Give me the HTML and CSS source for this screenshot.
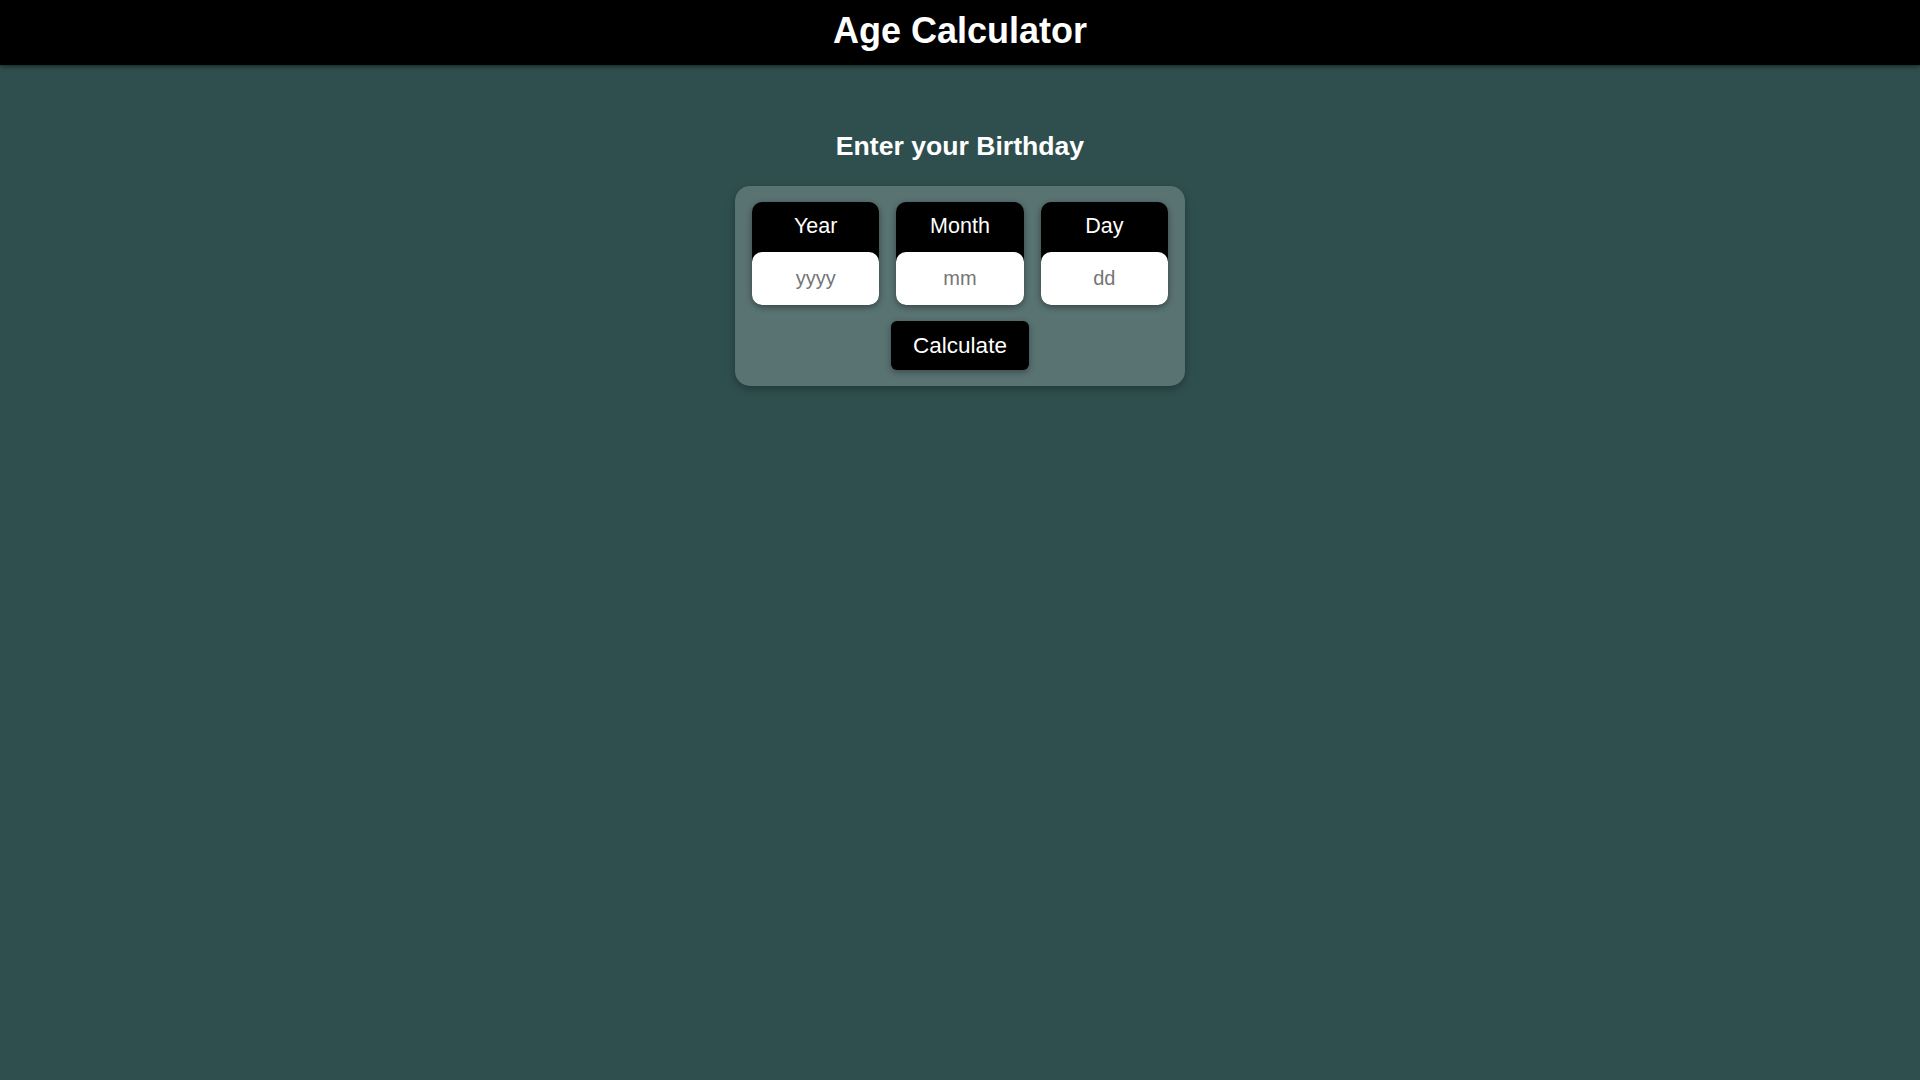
FILE: index.html
```html
<!DOCTYPE html>
<html lang="en">
<head>
<meta charset="utf-8">
<title>Age Calculator</title>
<link rel="stylesheet" href="styles.css">
</head>
<body>
<header class="topbar">
  <h1 class="title">Age Calculator</h1>
</header>
<main class="main">
  <h2 class="subtitle">Enter your Birthday</h2>
  <section class="card">
    <div class="fields">
      <div class="field">
        <label class="field-label" for="year">Year</label>
        <input class="field-input" id="year" type="text" placeholder="yyyy">
      </div>
      <div class="field">
        <label class="field-label" for="month">Month</label>
        <input class="field-input" id="month" type="text" placeholder="mm">
      </div>
      <div class="field">
        <label class="field-label" for="day">Day</label>
        <input class="field-input" id="day" type="text" placeholder="dd">
      </div>
    </div>
    <button class="calc-btn" type="button">Calculate</button>
  </section>
</main>
</body>
</html>
```

FILE: styles.css
```css
* { box-sizing: border-box; }

html, body {
  margin: 0;
  padding: 0;
}

body {
  background: #2f4f4f;
  font-family: "Liberation Sans", Arial, sans-serif;
  color: #fff;
  min-height: 1080px;
}

.topbar {
  background: #000;
  height: 65px;
  box-shadow: 0 2px 4px rgba(0, 0, 0, 0.45);
  text-align: center;
}

.title {
  margin: 0;
  font-size: 36px;
  font-weight: bold;
  line-height: 61px;
  color: #fff;
}

.main {
  display: flex;
  flex-direction: column;
  align-items: center;
  padding-top: 66px;
}

.subtitle {
  margin: 0 0 24px;
  font-size: 26.6px;
  font-weight: bold;
  line-height: 31px;
}

.card {
  width: 450px;
  background: #597272;
  border-radius: 15px;
  padding: 16px 17px 16px;
  display: flex;
  flex-direction: column;
  align-items: center;
  box-shadow: 0 3px 8px rgba(0, 0, 0, 0.3);
}

.fields {
  display: flex;
  gap: 17px;
  width: 100%;
}

.field {
  flex: 1;
  height: 103px;
  background: #000;
  border-radius: 10px;
  display: flex;
  flex-direction: column;
  box-shadow: 0 2px 6px rgba(0, 0, 0, 0.4);
}

.field-label {
  height: 50px;
  line-height: 48px;
  text-align: center;
  font-size: 21.5px;
  color: #fff;
}

.field-input {
  height: 53px;
  width: 100%;
  border: none;
  border-radius: 10px;
  background: #fff;
  text-align: center;
  font-family: "Liberation Sans", Arial, sans-serif;
  font-size: 20px;
  color: #000;
  padding: 0;
  outline: none;
}

.field-input::placeholder {
  color: #757575;
}

.calc-btn {
  margin-top: 16px;
  width: 138px;
  height: 49px;
  background: #000;
  color: #fff;
  border: none;
  border-radius: 6px;
  font-family: "Liberation Sans", Arial, sans-serif;
  font-size: 22.5px;
  box-shadow: 0 2px 6px rgba(0, 0, 0, 0.35);
  cursor: pointer;
}
```
